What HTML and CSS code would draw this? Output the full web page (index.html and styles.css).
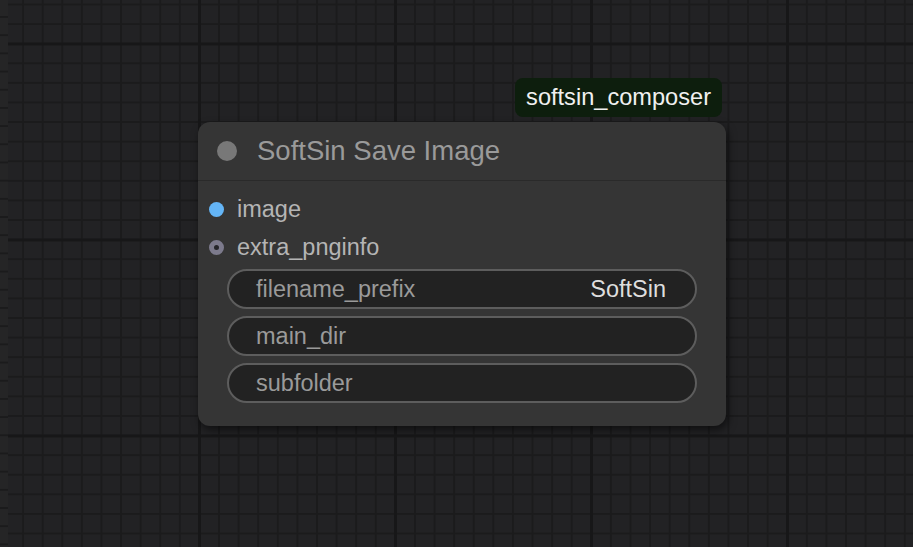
FILE: index.html
```html
<!DOCTYPE html>
<html lang="en">
<head>
    <meta charset="UTF-8">
    <meta name="viewport" content="width=device-width, initial-scale=1.0">
    <title>SoftSin Save Image</title>
    <link rel="stylesheet" href="styles.css">
</head>
<body>
    <div class="canvas">
        <div class="edge"></div>

        <div class="node">
            <div class="badge">softsin_composer</div>
            <div class="title">
                <span class="title-dot"></span>
                <span class="title-text">SoftSin Save Image</span>
            </div>
            <div class="body">
                <div class="slot">
                    <span class="slot-dot image"></span>
                    <span class="slot-name">image</span>
                </div>
                <div class="slot">
                    <span class="slot-dot extra"></span>
                    <span class="slot-name">extra_pnginfo</span>
                </div>
                <div class="widgets">
                    <div class="widget">
                        <span class="widget-label">filename_prefix</span>
                        <span class="widget-value">SoftSin</span>
                    </div>
                    <div class="widget">
                        <span class="widget-label">main_dir</span>
                        <span class="widget-value"></span>
                    </div>
                    <div class="widget">
                        <span class="widget-label">subfolder</span>
                        <span class="widget-value"></span>
                    </div>
                </div>
            </div>
        </div>
    </div>
</body>
</html>
```

FILE: styles.css
```css
body {
    margin: 0;
    font-family: "Liberation Sans", Arial, sans-serif;
    background-color: #222224;
    overflow: hidden;
}
.canvas {
    position: relative;
    width: 913px;
    height: 547px;
    background-color: #222224;
    background-image:
        linear-gradient(to right, #171718 0, #171718 3px, transparent 3px),
        linear-gradient(to bottom, #171718 0, #171718 3px, transparent 3px),
        linear-gradient(to right, #1b1b1c 0, #1b1b1c 2px, transparent 2px),
        linear-gradient(to bottom, #1b1b1c 0, #1b1b1c 2px, transparent 2px);
    background-size: 196px 196px, 196px 196px, 19.6px 19.6px, 19.6px 19.6px;
    background-position: 198px 0, 0 42.5px, 2.5px 0, 0 3.5px;
}
.edge {
    position: absolute;
    left: 0;
    top: 0;
    width: 8px;
    height: 100%;
    background-color: #252526;
    background-image: linear-gradient(to bottom, #1b1b1c 0, #1b1b1c 2px, transparent 2px);
    background-size: 8px 18.2px;
    background-position: 0 16px;
}
.node {
    position: absolute;
    left: 198px;
    top: 122px;
    width: 528px;
    height: 304px;
    background-color: #353535;
    border-radius: 12px;
    box-shadow: 2px 4px 8px rgba(0, 0, 0, 0.55);
}
.badge {
    position: absolute;
    right: 4px;
    top: -44px;
    height: 39px;
    padding: 0 11px;
    display: flex;
    align-items: center;
    background-color: #0d1e0d;
    color: #f0f0f0;
    font-size: 23.6px;
    border-radius: 8px;
}
.title {
    height: 58px;
    display: flex;
    align-items: center;
    border-bottom: 1px solid #2a2a2a;
}
.title-dot {
    width: 20px;
    height: 20px;
    border-radius: 50%;
    background-color: #787878;
    margin-left: 19px;
    margin-right: 20px;
}
.title-text {
    color: #9a9a9a;
    font-size: 27.5px;
}
.body {
    padding-top: 9px;
}
.slot {
    height: 38px;
    display: flex;
    align-items: center;
}
.slot-dot {
    width: 15px;
    height: 15px;
    border-radius: 50%;
    margin-left: 11px;
    margin-right: 13px;
    box-sizing: border-box;
}
.slot-dot.image {
    background-color: #64b5f6;
}
.slot-dot.extra {
    background-color: #25252a;
    border: 5px solid #7c7a8c;
}
.slot-name {
    color: #b4b4b4;
    font-size: 23.5px;
}
.widgets {
    margin-top: 3px;
    padding: 0 29px;
    display: flex;
    flex-direction: column;
    gap: 7px;
}
.widget {
    height: 40px;
    box-sizing: border-box;
    border: 2px solid #5d5d5d;
    border-radius: 20px;
    background-color: #222222;
    display: flex;
    align-items: center;
    justify-content: space-between;
    padding: 0 29px 0 27px;
    font-size: 23.5px;
}
.widget-label {
    color: #9a9a9a;
}
.widget-value {
    color: #dedede;
}
```
